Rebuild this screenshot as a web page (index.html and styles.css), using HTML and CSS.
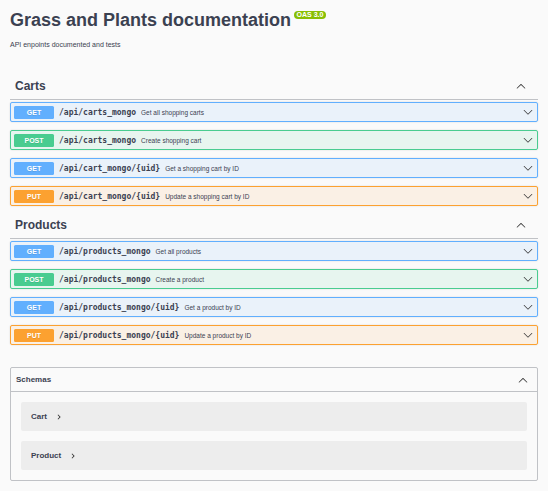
FILE: index.html
```html
<!DOCTYPE html>
<html lang="en">
<head>
<meta charset="utf-8">
<title>Grass and Plants documentation</title>
<link rel="stylesheet" href="styles.css">
</head>
<body>
<div class="wrapper">
  <div class="info">
    <h2 class="title"><span class="title-text">Grass and Plants documentation</span><span class="version">OAS 3.0</span></h2>
    <p class="desc">API enpoints documented and tests</p>
  </div>

  <section class="tag-section">
    <h3 class="tag"><span class="tag-name">Carts</span>
      <svg class="arrow" viewBox="0 0 20 20"><path d="M17.418 14.908c.272.268.709.268.979 0s.271-.701 0-.969l-7.908-7.83c-.27-.268-.707-.268-.979 0l-7.908 7.83c-.27.268-.27.701 0 .969.271.268.709.268.979 0L10 7.767l7.418 7.141z"/></svg>
    </h3>
    <div class="opblock get">
      <span class="method">GET</span><span class="path">/api/carts_mongo</span><span class="summary">Get all shopping carts</span>
      <svg class="arrow" viewBox="0 0 20 20"><path d="M17.418 6.109c.272-.268.709-.268.979 0s.271.701 0 .969l-7.908 7.83c-.27.268-.707.268-.979 0l-7.908-7.83c-.27-.268-.27-.701 0-.969.271-.268.709-.268.979 0L10 13.25l7.418-7.141z"/></svg>
    </div>
    <div class="opblock post">
      <span class="method">POST</span><span class="path">/api/carts_mongo</span><span class="summary">Create shopping cart</span>
      <svg class="arrow" viewBox="0 0 20 20"><path d="M17.418 6.109c.272-.268.709-.268.979 0s.271.701 0 .969l-7.908 7.83c-.27.268-.707.268-.979 0l-7.908-7.83c-.27-.268-.27-.701 0-.969.271-.268.709-.268.979 0L10 13.25l7.418-7.141z"/></svg>
    </div>
    <div class="opblock get">
      <span class="method">GET</span><span class="path">/api/cart_mongo/{uid}</span><span class="summary">Get a shopping cart by ID</span>
      <svg class="arrow" viewBox="0 0 20 20"><path d="M17.418 6.109c.272-.268.709-.268.979 0s.271.701 0 .969l-7.908 7.83c-.27.268-.707.268-.979 0l-7.908-7.83c-.27-.268-.27-.701 0-.969.271-.268.709-.268.979 0L10 13.25l7.418-7.141z"/></svg>
    </div>
    <div class="opblock put">
      <span class="method">PUT</span><span class="path">/api/cart_mongo/{uid}</span><span class="summary">Update a shopping cart by ID</span>
      <svg class="arrow" viewBox="0 0 20 20"><path d="M17.418 6.109c.272-.268.709-.268.979 0s.271.701 0 .969l-7.908 7.83c-.27.268-.707.268-.979 0l-7.908-7.83c-.27-.268-.27-.701 0-.969.271-.268.709-.268.979 0L10 13.25l7.418-7.141z"/></svg>
    </div>
  </section>

  <section class="tag-section">
    <h3 class="tag"><span class="tag-name">Products</span>
      <svg class="arrow" viewBox="0 0 20 20"><path d="M17.418 14.908c.272.268.709.268.979 0s.271-.701 0-.969l-7.908-7.83c-.27-.268-.707-.268-.979 0l-7.908 7.83c-.27.268-.27.701 0 .969.271.268.709.268.979 0L10 7.767l7.418 7.141z"/></svg>
    </h3>
    <div class="opblock get">
      <span class="method">GET</span><span class="path">/api/products_mongo</span><span class="summary">Get all products</span>
      <svg class="arrow" viewBox="0 0 20 20"><path d="M17.418 6.109c.272-.268.709-.268.979 0s.271.701 0 .969l-7.908 7.83c-.27.268-.707.268-.979 0l-7.908-7.83c-.27-.268-.27-.701 0-.969.271-.268.709-.268.979 0L10 13.25l7.418-7.141z"/></svg>
    </div>
    <div class="opblock post">
      <span class="method">POST</span><span class="path">/api/products_mongo</span><span class="summary">Create a product</span>
      <svg class="arrow" viewBox="0 0 20 20"><path d="M17.418 6.109c.272-.268.709-.268.979 0s.271.701 0 .969l-7.908 7.83c-.27.268-.707.268-.979 0l-7.908-7.83c-.27-.268-.27-.701 0-.969.271-.268.709-.268.979 0L10 13.25l7.418-7.141z"/></svg>
    </div>
    <div class="opblock get">
      <span class="method">GET</span><span class="path">/api/products_mongo/{uid}</span><span class="summary">Get a product by ID</span>
      <svg class="arrow" viewBox="0 0 20 20"><path d="M17.418 6.109c.272-.268.709-.268.979 0s.271.701 0 .969l-7.908 7.83c-.27.268-.707.268-.979 0l-7.908-7.83c-.27-.268-.27-.701 0-.969.271-.268.709-.268.979 0L10 13.25l7.418-7.141z"/></svg>
    </div>
    <div class="opblock put">
      <span class="method">PUT</span><span class="path">/api/products_mongo/{uid}</span><span class="summary">Update a product by ID</span>
      <svg class="arrow" viewBox="0 0 20 20"><path d="M17.418 6.109c.272-.268.709-.268.979 0s.271.701 0 .969l-7.908 7.83c-.27.268-.707.268-.979 0l-7.908-7.83c-.27-.268-.27-.701 0-.969.271-.268.709-.268.979 0L10 13.25l7.418-7.141z"/></svg>
    </div>
  </section>

  <section class="models">
    <h4 class="models-head"><span>Schemas</span>
      <svg class="arrow" viewBox="0 0 20 20"><path d="M17.418 14.908c.272.268.709.268.979 0s.271-.701 0-.969l-7.908-7.83c-.27-.268-.707-.268-.979 0l-7.908 7.83c-.27.268-.27.701 0 .969.271.268.709.268.979 0L10 7.767l7.418 7.141z"/></svg>
    </h4>
    <div class="models-body">
      <div class="model"><span class="model-title">Cart</span>
        <svg class="toggle" viewBox="0 0 24 24"><path d="M10 6 8.59 7.41 13.17 12l-4.58 4.59L10 18l6-6z"/></svg>
      </div>
      <div class="model"><span class="model-title">Product</span>
        <svg class="toggle" viewBox="0 0 24 24"><path d="M10 6 8.59 7.41 13.17 12l-4.58 4.59L10 18l6-6z"/></svg>
      </div>
    </div>
  </section>
</div>
</body>
</html>
```

FILE: styles.css
```css
html, body {
  margin: 0;
  padding: 0;
  background: #fafafa;
}

body {
  font-family: "Liberation Sans", Arial, sans-serif;
  color: #3b4151;
}

.wrapper {
  padding: 10px 10px 0;
}

.info {
  margin-bottom: 23px;
}

.title {
  display: flex;
  align-items: flex-start;
  margin: 0;
  font-size: 18px;
  line-height: 21px;
  font-weight: 700;
  color: #3b4151;
}

.version {
  margin: 0.5px 0 0 3px;
  padding: 0 2.5px;
  background: #89bf04;
  border-radius: 57px;
  color: #fff;
  font-size: 7px;
  line-height: 8px;
  font-weight: 700;
}

.desc {
  margin: 9px 0 0;
  font-size: 7px;
  line-height: 10px;
  color: #3b4151;
}

.tag-section {
  display: flex;
  flex-direction: column;
}

.tag {
  display: flex;
  align-items: center;
  margin: 0 0 2px;
  padding: 5px 12px 5px 5px;
  font-size: 12px;
  line-height: 16px;
  font-weight: 700;
  color: #3b4151;
  border-bottom: 1px solid rgba(59, 65, 81, 0.3);
}

.tag-name {
  flex: 1;
}

.arrow {
  width: 10px;
  height: 10px;
  fill: #333;
  flex: none;
}

.opblock {
  display: flex;
  align-items: center;
  box-sizing: border-box;
  height: 20px;
  margin-bottom: 8px;
  padding: 0 4px 0 3px;
  border: 1px solid;
  border-radius: 2px;
  box-shadow: 0 0 1.5px rgba(0, 0, 0, 0.19);
}

.opblock:last-child {
  margin-bottom: 6px;
}

.opblock .arrow {
  margin-left: auto;
}

.method {
  flex: none;
  width: 40px;
  height: 13px;
  line-height: 13px;
  border-radius: 1.5px;
  text-align: center;
  color: #fff;
  font-size: 7px;
  font-weight: 700;
  text-shadow: 0 0.5px 0 rgba(0, 0, 0, 0.1);
}

.path {
  padding: 0 5px;
  font-family: "DejaVu Sans Mono", "Liberation Mono", monospace;
  font-size: 8px;
  font-weight: 700;
  color: #3b4151;
}

.summary {
  font-size: 6.5px;
  color: #3b4151;
}

.get {
  border-color: #61affe;
  background: rgba(97, 175, 254, 0.1);
}
.get .method { background: #61affe; }

.post {
  border-color: #49cc90;
  background: rgba(73, 204, 144, 0.1);
}
.post .method { background: #49cc90; }

.put {
  border-color: #fca130;
  background: rgba(252, 161, 48, 0.1);
}
.put .method { background: #fca130; }

.models {
  margin-top: 16px;
  border: 1px solid rgba(59, 65, 81, 0.3);
  border-radius: 2px;
}

.models-head {
  display: flex;
  align-items: center;
  justify-content: space-between;
  box-sizing: border-box;
  height: 24px;
  margin: 0;
  padding: 0 9px 0 5px;
  border-bottom: 1px solid rgba(59, 65, 81, 0.3);
  font-size: 8px;
  font-weight: 700;
  color: #3b4151;
}

.models-body {
  display: flex;
  flex-direction: column;
  gap: 10px;
  padding: 10px;
}

.model {
  display: flex;
  align-items: center;
  height: 29px;
  padding: 0 10px;
  background: rgba(0, 0, 0, 0.05);
  border-radius: 2px;
}

.model-title {
  font-size: 8px;
  font-weight: 700;
  color: #3b4151;
}

.toggle {
  width: 10px;
  height: 10px;
  margin-left: 7px;
  fill: #333;
}
```
